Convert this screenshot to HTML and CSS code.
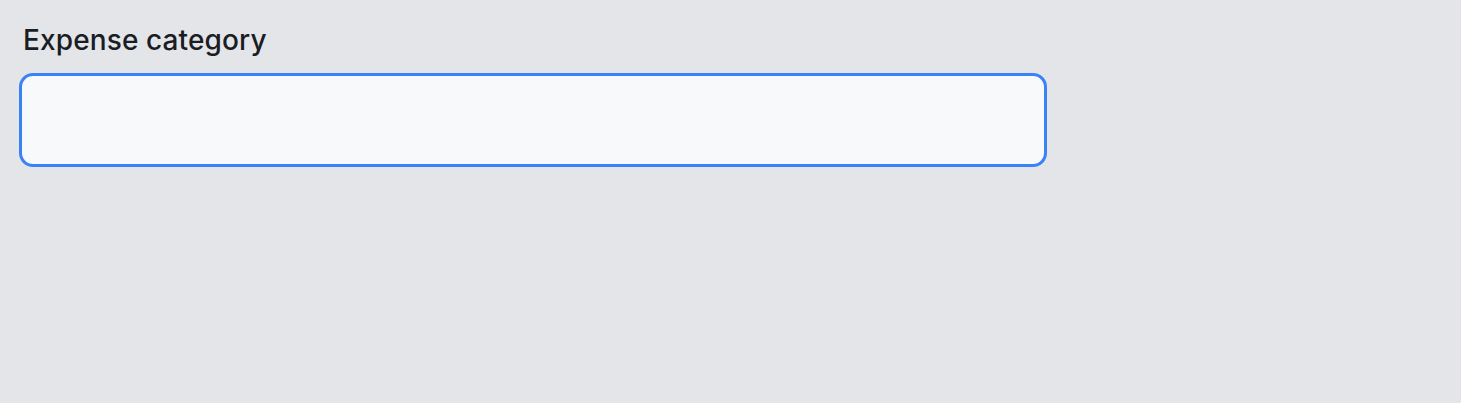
FILE: index.html
```html
<!DOCTYPE html>
<html lang="en">
<head>
<meta charset="utf-8">
<link rel="stylesheet" href="styles.css">
<title>Expense category</title>
</head>
<body>
<div class="field">
  <label class="label" for="cat">Expense category</label>
  <input class="input" id="cat" type="text">
</div>
</body>
</html>
```
FILE: styles.css
```css
html, body {
  margin: 0;
  padding: 0;
  background: #e4e5e9;
  height: 100%;
}
body {
  font-family: Inter, "Noto Sans", sans-serif;
  color: #1a1d24;
}
.field {
  display: flex;
  flex-direction: column;
  gap: 16px;
  padding: 23px 0 0 19px;
  width: 1028px;
}
.label {
  font-size: 28px;
  font-weight: 500;
  line-height: 34px;
  letter-spacing: 0.12px;
  padding-left: 4px;
}
.input {
  box-sizing: border-box;
  width: 1028px;
  height: 94px;
  border: 3px solid #3b82f6;
  border-radius: 14px;
  background: #f8f9fb;
  outline: none;
  font: inherit;
  font-size: 24px;
  padding: 0 20px;
}
```
